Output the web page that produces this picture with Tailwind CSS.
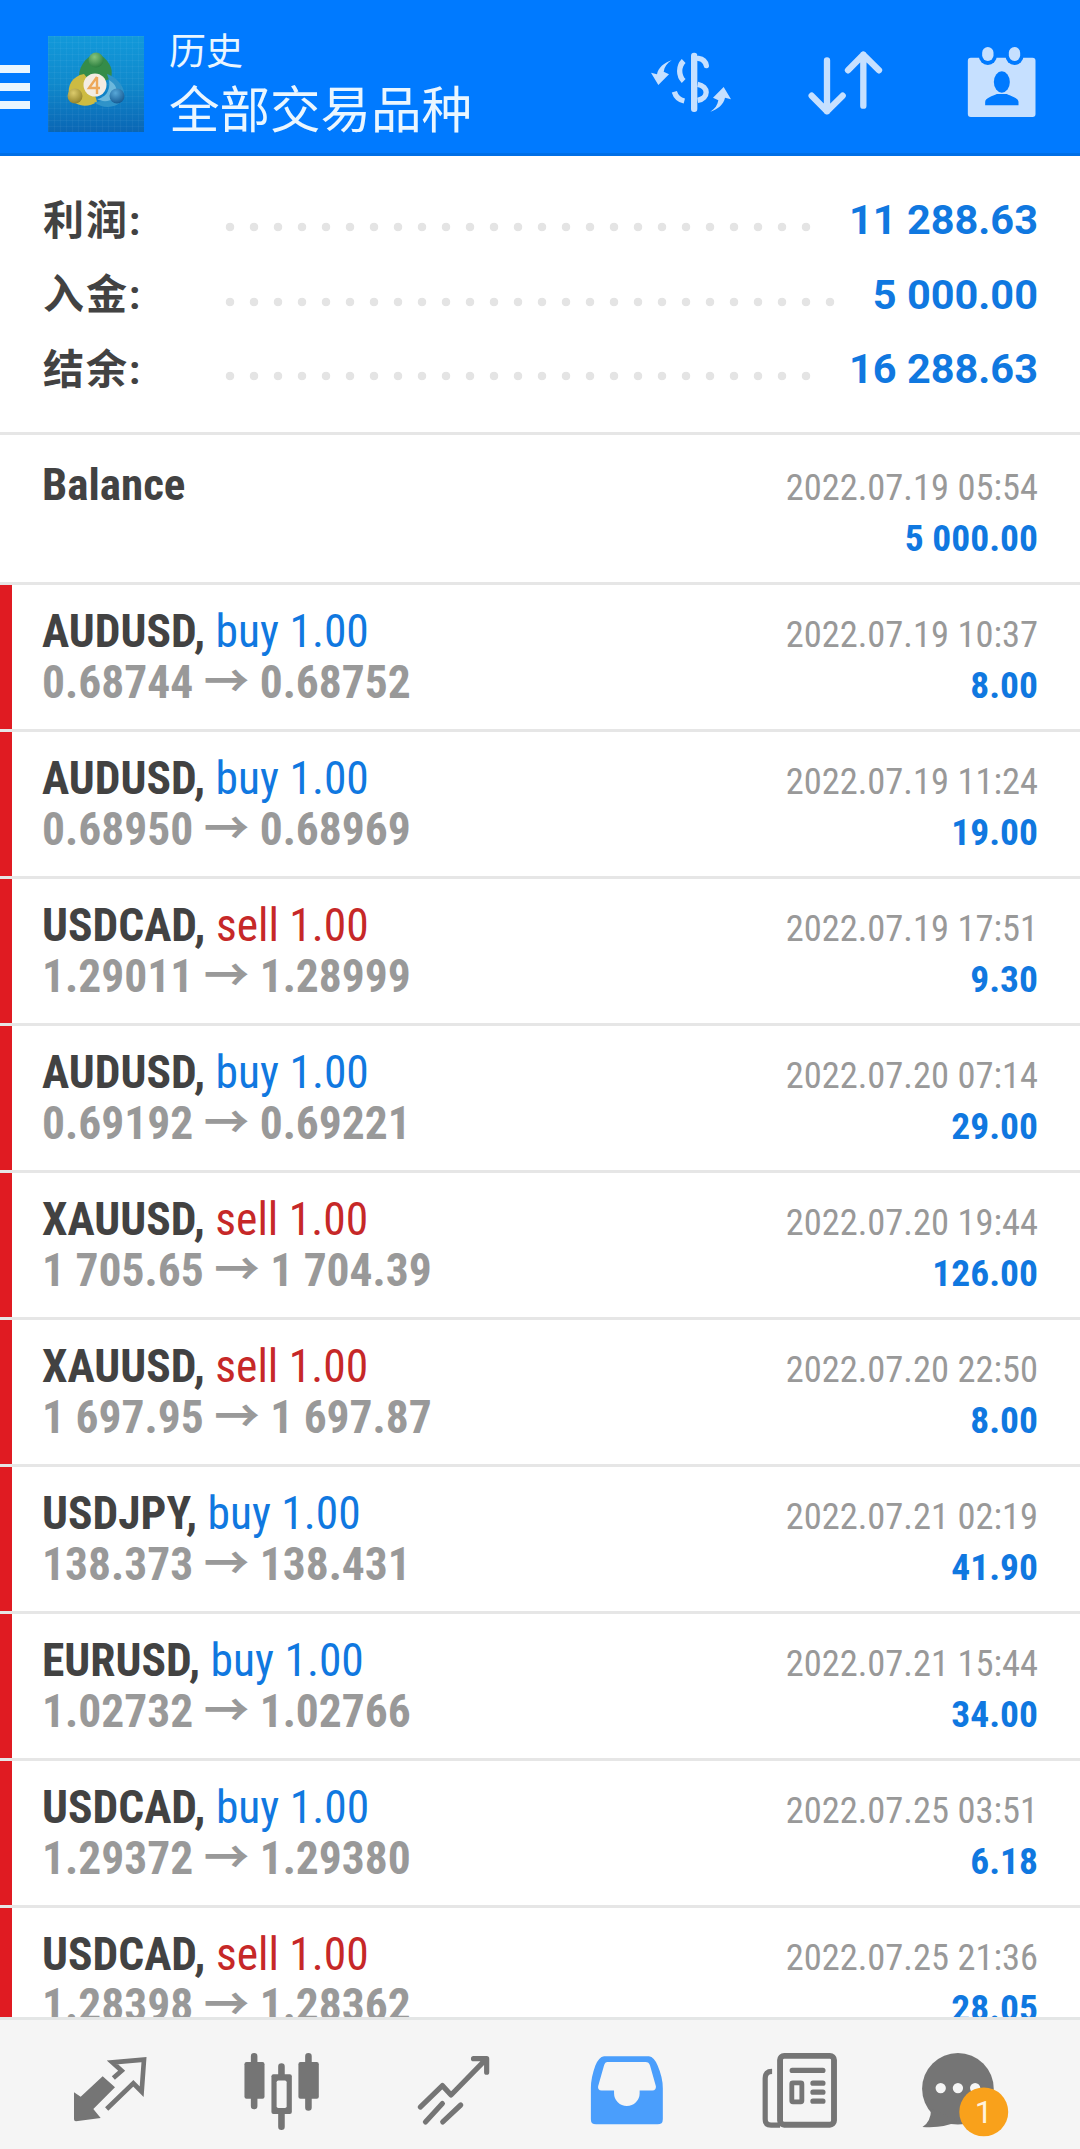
<!DOCTYPE html>
<html lang="zh">
<head>
<meta charset="UTF-8">
<meta name="viewport" content="width=device-width, initial-scale=1.0">
<title>历史</title>
<script src="https://cdn.jsdelivr.net/npm/@tailwindcss/browser@4"></script>
</head>
<body class="bg-white">
<div class="w-[1080px] h-[2149px] flex flex-col overflow-hidden font-['Roboto','Noto_Sans_CJK_SC',sans-serif]">

  <!-- Header -->
  <header class="h-[156px] shrink-0 flex items-start bg-[#007aff] border-b-[3px] border-[#006fe6]">
    <div class="w-[30px] mt-[65px] flex flex-col gap-[10px]">
      <div class="h-[8px] bg-[#eaf6ff]"></div>
      <div class="h-[8px] bg-[#eaf6ff]"></div>
      <div class="h-[8px] bg-[#eaf6ff]"></div>
    </div>
    <svg class="ml-[18px] mt-[36px] w-[96px] h-[96px] shrink-0" viewBox="0 0 96 96">
      <defs>
        <linearGradient id="logoBg" x1="0" y1="0" x2="0" y2="1">
          <stop offset="0" stop-color="#1299da"/>
          <stop offset="0.5" stop-color="#1089cc"/>
          <stop offset="1" stop-color="#0a66b4"/>
        </linearGradient>
        <pattern id="logoGrid" width="6" height="6" patternUnits="userSpaceOnUse">
          <path d="M6 0H0V6" fill="none" stroke="#ffffff" stroke-opacity="0.08" stroke-width="1"/>
        </pattern>
        <radialGradient id="ballG" cx="0.4" cy="0.3" r="0.75"><stop offset="0" stop-color="#86c47c"/><stop offset="1" stop-color="#277c3c"/></radialGradient>
        <radialGradient id="ballY" cx="0.4" cy="0.3" r="0.75"><stop offset="0" stop-color="#dccb6c"/><stop offset="1" stop-color="#8e7f26"/></radialGradient>
        <radialGradient id="ballB" cx="0.4" cy="0.3" r="0.75"><stop offset="0" stop-color="#58a8d8"/><stop offset="1" stop-color="#125790"/></radialGradient>
      </defs>
      <rect width="96" height="96" fill="url(#logoBg)"/>
      <rect width="96" height="96" fill="url(#logoGrid)"/>
      <path d="M48 17C36 22 30 32 31 44L47 50L63 42C66 32 60 22 48 17Z" fill="#358c49"/>
      <path d="M36 38C24 40 19 50 21 60C26 71 40 72 49 66L44 48Z" fill="#cdbb42"/>
      <path d="M59 38C70 42 78 52 76 62C70 72 56 74 46 66C56 66 64 60 63 50Z" fill="#2f93c9"/>
      <path d="M61 44C68 48 71 55 67 62C61 66 54 66 49 63C56 62 63 56 61 44Z" fill="#6cb8dc"/>
      <circle cx="48" cy="24" r="7.5" fill="url(#ballG)"/>
      <circle cx="27" cy="60" r="7.5" fill="url(#ballY)"/>
      <circle cx="69" cy="60" r="7.5" fill="url(#ballB)"/>
      <circle cx="47" cy="49" r="11.5" fill="#f3ece2"/>
      <path d="M49 41L41 52H52M49 41V58" fill="none" stroke="#eda85a" stroke-width="2.4"/>
    </svg>
    <div class="ml-[25px] text-[#eaf6ff]">
      <div class="text-[37px] leading-[44px] mt-[31px]">历史</div>
      <div class="text-[50.5px] leading-[60px] mt-[6px]">全部交易品种</div>
    </div>
    <!-- Toolbar icons -->
    <div class="ml-auto mr-[43px] flex items-start">
      <svg class="w-[100px] h-[80px] mt-[41px]" viewBox="0 0 300 240" fill="#c6e0ff">
        <rect x="150" y="35" width="19" height="178" rx="9"/>
        <path d="M128 60C112 76 112 104 128 120" fill="none" stroke="#c6e0ff" stroke-width="16"/>
        <path d="M172 52C186 54 194 62 196 74" fill="none" stroke="#c6e0ff" stroke-width="16" stroke-linecap="round"/>
        <path d="M100 152C104 166 114 176 130 180" fill="none" stroke="#c6e0ff" stroke-width="16"/>
        <path d="M170 130C204 136 204 172 170 178" fill="none" stroke="#c6e0ff" stroke-width="16"/>
        <path d="M92 58C78 66 70 78 68 92L84 100L52 132L30 95L48 100C52 80 70 65 92 58Z"/>
        <path d="M92 58C78 66 70 78 68 92L84 100L52 132L30 95L48 100C52 80 70 65 92 58Z" transform="rotate(180 150 135)"/>
      </svg>
      <svg class="ml-[65px] w-[80px] h-[70px] mt-[48px]" viewBox="620 145 240 210" fill="none" stroke="#c6e0ff" stroke-width="19" stroke-linecap="round" stroke-linejoin="round">
        <path d="M683 182V335M637 288L683 335L730 288"/>
        <path d="M792 318V165M746 212L792 165L839 212"/>
      </svg>
      <svg class="ml-[80px] w-[71px] h-[72px] mt-[46px]" viewBox="1100 140 212 216">
        <rect x="1105" y="175" width="203" height="178" rx="9" fill="#c6e0ff"/>
        <circle cx="1165" cy="170" r="27" fill="#007aff"/>
        <circle cx="1245" cy="170" r="27" fill="#007aff"/>
        <rect x="1148" y="143" width="34" height="42" rx="17" fill="#c6e0ff"/>
        <rect x="1228" y="143" width="34" height="42" rx="17" fill="#c6e0ff"/>
        <ellipse cx="1207" cy="248" rx="24" ry="32" fill="#007aff"/>
        <path d="M1157 318V308C1157 296 1180 290 1192 284H1222C1234 290 1257 296 1257 308V318Z" fill="#007aff"/>
      </svg>
    </div>
  </header>

  <!-- List -->
  <main class="flex-1 overflow-hidden">
    <section class="h-[279px] pt-[27px] pl-[43px] pr-[42px] border-b-[3px] border-[#e6e6e6]">
      <div class="h-[74.5px] flex items-center">
        <div class="w-[175px] mt-[2px] text-[41px] tracking-[2px] font-bold text-[#424242]">利润:</div>
        <div class="w-[600px] h-[10px] mt-[14px] bg-[radial-gradient(circle,#e4e4e4_4px,transparent_4.6px)] bg-[length:24px_10px]"></div>
        <div class="ml-auto text-[41.5px] font-bold text-[#1078e0]">11 288.63</div>
      </div>
      <div class="h-[74.5px] flex items-center">
        <div class="w-[175px] mt-[2px] text-[41px] tracking-[2px] font-bold text-[#424242]">入金:</div>
        <div class="w-[624px] h-[10px] mt-[14px] bg-[radial-gradient(circle,#e4e4e4_4px,transparent_4.6px)] bg-[length:24px_10px]"></div>
        <div class="ml-auto text-[41.5px] font-bold text-[#1078e0]">5 000.00</div>
      </div>
      <div class="h-[74.5px] flex items-center">
        <div class="w-[175px] mt-[2px] text-[41px] tracking-[2px] font-bold text-[#424242]">结余:</div>
        <div class="w-[600px] h-[10px] mt-[14px] bg-[radial-gradient(circle,#e4e4e4_4px,transparent_4.6px)] bg-[length:24px_10px]"></div>
        <div class="ml-auto text-[41.5px] font-bold text-[#1078e0]">16 288.63</div>
      </div>
    </section>

    <div class="h-[150px] flex justify-between pl-[42px] pr-[42px] border-b-[3px] border-[#e6e6e6] font-stretch-condensed">
      <div class="pt-[24px] text-[45px] leading-[51px] font-bold text-[#424242]">Balance</div>
      <div class="pt-[27px] text-right">
        <div class="text-[36.5px] leading-[51px] text-[#999999]">2022.07.19 05:54</div>
        <div class="text-[37.5px] leading-[51px] font-bold text-[#1078e0]">5 000.00</div>
      </div>
    </div>

    <div id="deals"></div>
  </main>

  <!-- Bottom navigation -->
  <nav class="h-[132px] shrink-0 flex items-start pt-[30px] pl-[60px] bg-[#f5f5f5] border-t-[3px] border-[#e4e6e6]">
    <svg class="w-[100px] h-[95px] -mt-[6px] shrink-0" viewBox="0 0 300 285" fill="#757575">
      <path d="M42 145L62 158L128 97L165 130L100 195L122 222L48 232Q42 232 42 226Z"/>
      <path d="M160 102L185 80L157 55L252 47L245 143L220 118L140 195" fill="none" stroke="#757575" stroke-width="14"/>
    </svg>
    <svg class="ml-[81px] w-[83px] h-[83px] shrink-0" viewBox="700 150 240 240" fill="#757575">
      <path d="M738 168V312M817 198V372M895 168V316" stroke="#757575" stroke-width="19" stroke-linecap="round"/>
      <rect x="710" y="185" width="58" height="106" rx="6"/>
      <rect x="788" y="220" width="59" height="115" rx="6"/>
      <rect x="803" y="238" width="29" height="80" rx="5" fill="#f5f5f5"/>
      <rect x="866" y="185" width="59" height="106" rx="6"/>
    </svg>
    <svg class="ml-[89px] w-[83px] h-[83px] shrink-0" viewBox="1200 150 240 240" fill="none" stroke="#757575" stroke-width="15" stroke-linecap="round" stroke-linejoin="round">
      <path d="M1221 315L1285 253L1310 280L1410 178M1375 175H1413V214"/>
      <path d="M1236 358L1285 305M1286 358L1338 309"/>
    </svg>
    <svg class="ml-[89px] w-[83px] h-[83px] shrink-0" viewBox="130 150 240 240">
      <path fill="#4a9efc" fill-rule="evenodd" d="M185 168H315Q330 170 340 195Q355 230 355 260V350Q355 365 340 365H162Q147 365 147 350V260Q147 230 160 195Q170 170 185 168ZM195 185Q188 185 185 195L168 255Q166 267 178 267H214V275A37 37 0 0 0 288 275V267H325Q336 267 335 255L318 195Q315 185 305 185Z"/>
    </svg>
    <svg class="ml-[92px] w-[83px] h-[83px] shrink-0" viewBox="640 150 240 240" fill="none" stroke="#757575">
      <rect x="698" y="167" width="156" height="199" rx="12" stroke-width="17"/>
      <path d="M675 212Q655 212 655 232V350Q655 367 672 367H698" stroke-width="15"/>
      <path d="M733 209H822M793 246H822M793 272H822M793 298H822" stroke-width="15" stroke-linecap="round"/>
      <rect x="732" y="245" width="29" height="55" rx="3" stroke-width="14"/>
    </svg>
    <svg class="ml-[76px] w-[93px] h-[90px] shrink-0" viewBox="1100 150 270 260">
      <circle cx="1213" cy="262" r="104" fill="#757575"/>
      <path d="M1135 320Q1135 358 1110 373Q1170 378 1215 355Z" fill="#757575"/>
      <circle cx="1163" cy="260" r="15" fill="#f5f5f5"/>
      <circle cx="1213" cy="260" r="15" fill="#f5f5f5"/>
      <circle cx="1263" cy="260" r="15" fill="#f5f5f5"/>
      <circle cx="1288" cy="329" r="71" fill="#f9a11b"/>
      <text x="1288" y="362" text-anchor="middle" font-size="92" font-family="Roboto" fill="#fff3dd">1</text>
    </svg>
  </nav>
</div>

<script>
  const deals = [
    ['AUDUSD,', 'buy 1.00', '0.68744', '0.68752', '2022.07.19 10:37', '8.00'],
    ['AUDUSD,', 'buy 1.00', '0.68950', '0.68969', '2022.07.19 11:24', '19.00'],
    ['USDCAD,', 'sell 1.00', '1.29011', '1.28999', '2022.07.19 17:51', '9.30'],
    ['AUDUSD,', 'buy 1.00', '0.69192', '0.69221', '2022.07.20 07:14', '29.00'],
    ['XAUUSD,', 'sell 1.00', '1 705.65', '1 704.39', '2022.07.20 19:44', '126.00'],
    ['XAUUSD,', 'sell 1.00', '1 697.95', '1 697.87', '2022.07.20 22:50', '8.00'],
    ['USDJPY,', 'buy 1.00', '138.373', '138.431', '2022.07.21 02:19', '41.90'],
    ['EURUSD,', 'buy 1.00', '1.02732', '1.02766', '2022.07.21 15:44', '34.00'],
    ['USDCAD,', 'buy 1.00', '1.29372', '1.29380', '2022.07.25 03:51', '6.18'],
    ['USDCAD,', 'sell 1.00', '1.28398', '1.28362', '2022.07.25 21:36', '28.05']
  ];

  document.getElementById('deals').innerHTML = deals.map(d => {
    const sideColor = d[1].startsWith('buy') ? 'text-[#1078e0]' : 'text-[#c62828]';
    return `
    <div class="h-[147px] flex font-stretch-condensed border-b-[3px] border-[#e6e6e6]">
      <div class="w-[12px] bg-[#e01b22]"></div>
      <div class="flex-1 flex justify-between pl-[30px] pr-[42px]">
        <div class="pt-[21px] text-[45.5px] leading-[51px]">
          <div class="whitespace-nowrap"><span class="font-bold text-[#424242]">${d[0]}</span> <span class="${sideColor}">${d[1]}</span></div>
          <div class="whitespace-nowrap font-bold text-[#999999]">${d[2]} → ${d[3]}</div>
        </div>
        <div class="pt-[24px] text-right">
          <div class="text-[36.5px] leading-[51px] text-[#999999]">${d[4]}</div>
          <div class="text-[37.5px] leading-[51px] font-bold text-[#1078e0]">${d[5]}</div>
        </div>
      </div>
    </div>`;
  }).join('');
</script>
</body>
</html>
